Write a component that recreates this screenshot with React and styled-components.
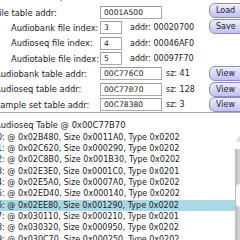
import React from 'react'
import styled, { createGlobalStyle } from 'styled-components'

const GlobalStyle = createGlobalStyle`
  html, body {
    margin: 0;
    padding: 0;
    background: #fff;
    overflow: hidden;
  }
  body {
    font-family: "DejaVu Sans", Verdana, sans-serif;
    color: #222;
  }
`

const Page = styled.div`
  margin-left: -5px;
  margin-top: -9px;
  width: 260px;
`

const Caption = styled.div`
  font-size: 8.4px;
  line-height: 10px;
  height: 14px;
  white-space: nowrap;
`

const Form = styled.div`
  display: grid;
  grid-template-columns: 105px 109px 40px;
  grid-auto-rows: 15.33px;
  align-items: center;
`

const Label = styled.div`
  font-size: 8.3px;
  white-space: nowrap;
  padding-left: ${props => props.indent ? '16px' : '0'};
`

const Field = styled.div`
  display: flex;
  align-items: center;
  gap: ${props => props.gap || 4}px;
`

const Input = styled.div`
  box-sizing: border-box;
  width: ${props => props.w}px;
  height: 13px;
  border: 1px solid #aaa;
  border-top-color: #999;
  background: #fff;
  font-size: 7.6px;
  line-height: 11px;
  padding-left: 3px;
  white-space: nowrap;
  overflow: hidden;
`

const Info = styled.span`
  font-size: 8px;
  white-space: nowrap;
`

const Button = styled.div`
  box-sizing: border-box;
  height: 15px;
  width: 40px;
  margin-top: ${props => props.shift || 0}px;
  border: 1px solid #8c8cc4;
  border-radius: 6px;
  background: linear-gradient(#f0f0ff, #d4d4fa 55%, #c2c2f2);
  font-size: 8px;
  line-height: 13px;
  padding-left: 6px;
  color: #223;
  white-space: nowrap;
`

const Divider = styled.div`
  height: 1px;
  background: #aaa;
`

const Title = styled.div`
  font-size: 8.4px;
  height: 11.33px;
  line-height: 11.33px;
  margin-top: 7px;
  white-space: nowrap;
`

const ListBox = styled.div`
  display: flex;
  height: 140px;
`

const Rows = styled.div`
  width: 240px;
  overflow: hidden;
`

const Row = styled.div`
  font-size: 8px;
  height: 11.33px;
  line-height: 11.33px;
  padding-left: 2px;
  white-space: nowrap;
  background: ${props => props.selected ? '#acd8e6' : 'transparent'};
`

const ScrollBar = styled.div`
  width: 12px;
  margin-top: 1px;
`

const Arrow = styled.div`
  width: 0;
  height: 0;
  margin-left: 1px;
  border-left: 5px solid transparent;
  border-right: 5px solid transparent;
  border-bottom: 9px solid #ddd;
`

const Track = styled.div`
  margin-top: 7px;
  height: 120px;
  background: linear-gradient(90deg, #bbb, #d4d4d4 40%, #cfcfcf);
  padding-top: 35px;
  box-sizing: border-box;
`

const Thumb = styled.div`
  height: 23px;
  margin-left: 1px;
  background: #fafafa;
  border-radius: 4px 0 0 4px;
`

const rows = [
  ['0x02B480', '0x0011A0', '0x0202'],
  ['0x02C620', '0x000290', '0x0202'],
  ['0x02C8B0', '0x001B30', '0x0202'],
  ['0x02E3E0', '0x0001C0', '0x0201'],
  ['0x02E5A0', '0x0007A0', '0x0202'],
  ['0x02ED40', '0x000140', '0x0202'],
  ['0x02EE80', '0x001290', '0x0202'],
  ['0x030110', '0x000210', '0x0201'],
  ['0x030320', '0x000950', '0x0202'],
  ['0x030C70', '0x000250', '0x0202'],
  ['0x030EC0', '0x0002A0', '0x0202'],
]

export default function App() {
  return (
    <>
      <GlobalStyle />
      <Page>
        <Caption>Header / Description (addr hex, index dec)</Caption>
        <Form>
          <Label>File table addr:</Label>
          <Field><Input w={62}>0001A500</Input></Field>
          <Button shift={-4}>Load</Button>

          <Label indent>Audiobank file index:</Label>
          <Field gap={8}><Input w={22}>3</Input><Info>addr: 00020700</Info></Field>
          <Button shift={-3}>Save</Button>

          <Label indent>Audioseq file index:</Label>
          <Field gap={8}><Input w={22}>4</Input><Info>addr: 00046AF0</Info></Field>
          <span />

          <Label indent>Audiotable file index:</Label>
          <Field gap={8}><Input w={22}>5</Input><Info>addr: 00097F70</Info></Field>
          <span />

          <Label>Audiobank table addr:</Label>
          <Field><Input w={62}>00C776C0</Input><Info>sz: 41</Info></Field>
          <Button>View</Button>

          <Label>Audioseq table addr:</Label>
          <Field><Input w={62}>00C77B70</Input><Info>sz: 128</Info></Field>
          <Button>View</Button>

          <Label>Sample set table addr:</Label>
          <Field><Input w={62}>00C78380</Input><Info>sz: 3</Info></Field>
          <Button>View</Button>
        </Form>
        <Divider />
        <Title>Audioseq Table @ 0x00C77B70</Title>
        <ListBox>
          <Rows>
            {rows.map(([addr, size, type], i) => (
              <Row key={addr} selected={i === 6}>
                {i}: @ {addr}, Size {size}, Type {type}
              </Row>
            ))}
          </Rows>
          <ScrollBar>
            <Arrow />
            <Track><Thumb /></Track>
          </ScrollBar>
        </ListBox>
      </Page>
    </>
  )
}
